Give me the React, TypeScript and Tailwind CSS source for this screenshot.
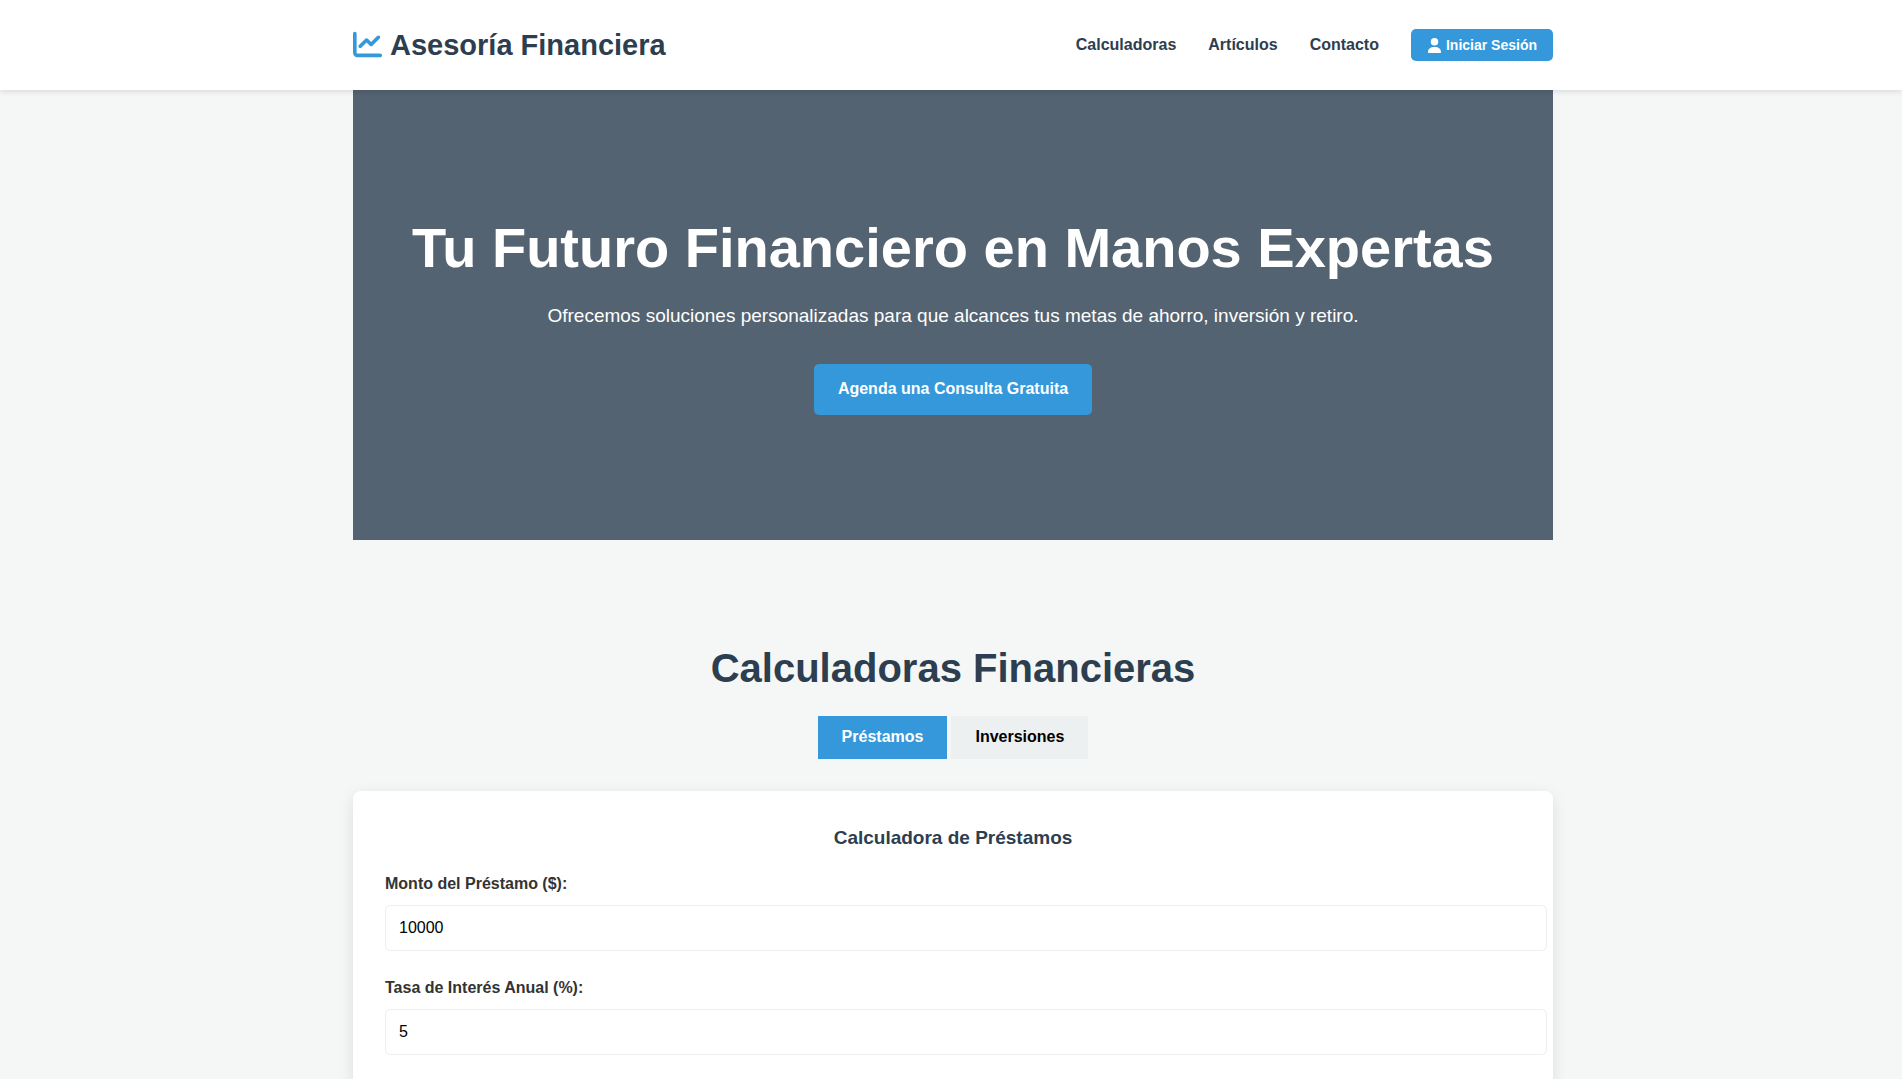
import { useState } from "react";
import { FaChartLine, FaUser } from "react-icons/fa6";

const links = [
  { label: "Calculadoras", href: "#calculadoras" },
  { label: "Artículos", href: "#articulos" },
  { label: "Contacto", href: "#contacto" },
];

const calculators = [
  {
    tab: "Préstamos",
    title: "Calculadora de Préstamos",
    fields: [
      { id: "monto", label: "Monto del Préstamo ($):", value: "10000" },
      { id: "tasa", label: "Tasa de Interés Anual (%):", value: "5" },
    ],
  },
  {
    tab: "Inversiones",
    title: "Calculadora de Inversiones",
    fields: [
      { id: "inicial", label: "Inversión Inicial ($):", value: "1000" },
      { id: "rendimiento", label: "Rendimiento Anual (%):", value: "7" },
    ],
  },
];

function Header() {
  return (
    <header className="relative bg-white pl-1 shadow-[0_2px_5px_rgba(0,0,0,0.1)]">
      <div className="mx-auto flex h-[90px] max-w-[1200px] items-center justify-between">
        <a href="#" className="flex items-start gap-2 text-[29px] leading-[31px] font-bold">
          <FaChartLine className="text-[#3498db]" />
          <span>Asesoría Financiera</span>
        </a>
        <nav className="flex items-center gap-8">
          {links.map((link) => (
            <a key={link.href} href={link.href} className="font-bold">
              {link.label}
            </a>
          ))}
          <button
            type="button"
            className="flex h-8 items-center gap-1 rounded-[5px] bg-[#3498db] px-4 text-[14px] font-bold text-white"
          >
            <FaUser className="text-[15px]" />
            Iniciar Sesión
          </button>
        </nav>
      </div>
    </header>
  );
}

function Hero() {
  return (
    <section className="flex flex-col items-center bg-[#546371] px-4 pt-[113px] pb-[125px] text-center text-white">
      <h1 className="text-[56px] leading-[90px] font-bold">Tu Futuro Financiero en Manos Expertas</h1>
      <p className="mt-2 text-[19px] leading-[30px]">
        Ofrecemos soluciones personalizadas para que alcances tus metas de ahorro, inversión y retiro.
      </p>
      <a href="#contacto" className="mt-[33px] rounded-[5px] bg-[#3498db] px-6 pt-[13px] pb-[14px] font-bold">
        Agenda una Consulta Gratuita
      </a>
    </section>
  );
}

function Calculators() {
  const [active, setActive] = useState(0);
  const calculator = calculators[active];
  return (
    <section id="calculadoras" className="flex grow flex-col pt-24">
      <h2 className="text-center text-[40px] leading-[64px] font-bold">Calculadoras Financieras</h2>
      <div className="mt-4 flex justify-center gap-1">
        {calculators.map((item, index) => (
          <button
            key={item.tab}
            type="button"
            onClick={() => setActive(index)}
            className={
              index === active
                ? "h-[43px] bg-[#3498db] px-6 pb-0.5 font-bold text-white"
                : "h-[43px] bg-[#ecf0f1] px-6 pb-0.5 font-bold text-black"
            }
          >
            {item.tab}
          </button>
        ))}
      </div>
      <form className="mt-8 rounded-t-lg bg-white p-8 shadow-[0_4px_15px_rgba(0,0,0,0.1)]">
        <h3 className="mb-[18px] text-center text-[19px] leading-[30px] font-bold">{calculator.title}</h3>
        {calculator.fields.map((field) => (
          <div key={field.id} className="mb-6">
            <label htmlFor={field.id} className="mb-2 block leading-[26px] font-bold text-[#333]">
              {field.label}
            </label>
            <input
              id={field.id}
              type="text"
              inputMode="decimal"
              defaultValue={field.value}
              className="block h-[46px] w-[calc(100%+26px)] rounded-[5px] border border-[#eeeeee] px-[13px] text-black"
            />
          </div>
        ))}
      </form>
    </section>
  );
}

export default function App() {
  return (
    <div className="h-screen overflow-hidden bg-[#f4f7f6] font-['Liberation_Sans',Arial,sans-serif] text-base text-[#2c3e50]">
      <Header />
      <main className="pl-1">
        <div className="mx-auto max-w-[1200px]">
          <Hero />
          <Calculators />
        </div>
      </main>
    </div>
  );
}
